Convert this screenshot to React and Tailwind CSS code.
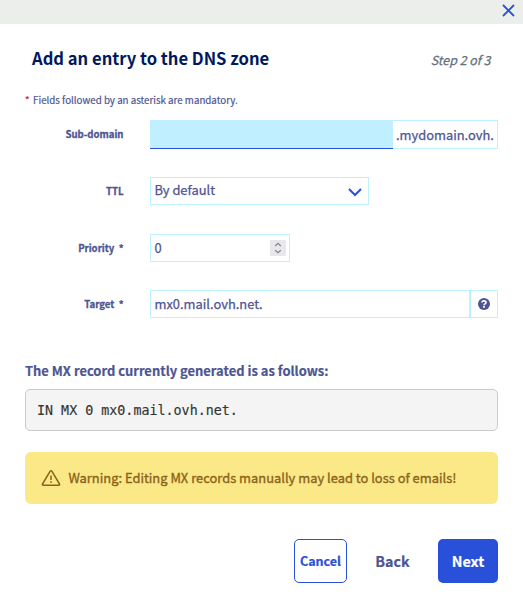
import React from "react";

function Row({ label, top, children }) {
  return (
    <div className={`flex ${top}`}>
      <div className="w-[98.5px] text-right text-[9.6px] leading-[28px] font-bold whitespace-pre [-webkit-text-stroke:0.3px]">{label}</div>
      <div className="ml-[26.5px] flex flex-1">{children}</div>
    </div>
  );
}

export default function App() {
  return (
    <div className="h-[598px] w-[523px] overflow-hidden bg-white font-['Noto_Sans_CJK_JP',sans-serif] text-[#4d5592]">
      <header className="flex h-6 justify-end bg-[#eceeeb] pr-[8px] pt-[4px]">
        <svg width="13" height="13" viewBox="0 0 13 13" fill="none" stroke="#2850d8" strokeWidth="1.8">
          <path d="M1 1 12 12M12 1 1 12" />
        </svg>
      </header>
      <main className="px-[25px]">
        <div className="flex h-[70px] items-center justify-between pl-[7px] pr-[7.5px]">
          <h1 className="pb-[2px] text-[16.6px] font-bold whitespace-nowrap text-[#00185e]">Add an entry to the DNS zone</h1>
          <span className="pt-[2px] text-[12.4px] italic whitespace-nowrap text-[#636e78] [-webkit-text-stroke:0.25px]">Step 2 of 3</span>
        </div>
        <p className="-mt-[1px] flex h-[14px] items-center gap-[3.5px] text-[9.75px] whitespace-nowrap [-webkit-text-stroke:0.2px]">
          <span className="text-[#d0203a]">*</span>
          <span>Fields followed by an asterisk are mandatory.</span>
        </p>

        <Row label="Sub-domain" top="mt-[13px]">
          <div className="h-[29px] w-[243px] border-b border-[#2850d8] bg-[#c0f0ff]" />
          <div className="h-[29px] w-[105px] border border-l-0 border-[#bef1ff] pl-[3px] text-[12.9px] leading-[28px] whitespace-nowrap [-webkit-text-stroke:0.25px]">.mydomain.ovh.</div>
        </Row>
        <Row label="TTL" top="mt-[28px]">
          <div className="flex h-[28px] w-[219px] items-center justify-between border border-[#bef1ff] pl-[3.5px] pr-[6px] text-[12.9px] leading-[24px] [-webkit-text-stroke:0.25px]">
            <span className="pb-[2px]">By default</span>
            <svg className="mt-[3px]" width="14" height="9" viewBox="0 0 14 9" fill="none" stroke="#2850d8" strokeWidth="2">
              <path d="m1 1 6 6 6-6" />
            </svg>
          </div>
        </Row>
        <Row label="Priority  *" top="mt-[29px]">
          <div className="flex h-[28px] w-[140px] items-center justify-between border border-[#bef1ff] pl-[3.5px] pr-[3px] text-[12.9px] leading-[26px] [-webkit-text-stroke:0.25px]">
            <span>0</span>
            <span className="flex h-4 w-4 items-center justify-center bg-[#e8e8ec]">
              <svg width="8" height="12" viewBox="0 0 8 12" fill="none" stroke="#85858c" strokeWidth="1.2">
                <path d="m1.2 4 2.8-2.6L6.8 4M1.2 8.2 4 10.8l2.8-2.6" />
              </svg>
            </span>
          </div>
        </Row>
        <Row label="Target  *" top="mt-[28px]">
          <div className="h-[28px] w-[320px] border border-[#bef1ff] pl-[3.5px] text-[12.9px] leading-[26px] [-webkit-text-stroke:0.25px]">mx0.mail.ovh.net.</div>
          <div className="flex h-[28px] w-[28px] items-center justify-center border border-[#bef1ff]">
            <svg width="12" height="12" viewBox="0 0 12 12">
              <circle cx="6" cy="6" r="6" fill="#4d5592" />
              <path d="M4 4.6C4 2.3 8 2.3 8 4.5 8 5.9 6 5.8 6 7.2" fill="none" stroke="#fff" strokeWidth="1.7" />
              <path d="M5.1 8h1.8v1.7H5.1z" fill="#fff" />
            </svg>
          </div>
        </Row>

        <h2 className="mt-[43px] h-[20px] text-[12.95px] leading-[20px] font-bold whitespace-nowrap [-webkit-text-stroke:0.2px]">The MX record currently generated is as follows:</h2>
        <pre className="mt-[8px] h-[42px] rounded-[5px] border border-[#cacaca] bg-[#f4f4f4] pt-[1px] pl-[11px] font-['DejaVu_Sans_Mono',monospace] text-[13.35px] leading-[40px] text-[#333] [-webkit-text-stroke:0.15px]">IN MX 0 mx0.mail.ovh.net.</pre>
        <div className="mt-[21px] flex h-[52px] items-center rounded-[6px] bg-[#fbe988] pl-[16px] text-[#8c631a]">
          <svg width="20" height="18" viewBox="0 0 20 18" fill="none" stroke="currentColor" strokeWidth="1.5" strokeLinejoin="round">
            <path d="M9.2 2.1 1.5 15c-.3.6 0 1.2.7 1.2h15.6c.7 0 1-.6.7-1.2L10.8 2.1c-.4-.6-1.2-.6-1.6 0Z" />
            <path d="M10 6.5v4.5M10 12.3v1.7" />
          </svg>
          <span className="ml-[7.5px] text-[12.92px] whitespace-nowrap [-webkit-text-stroke:0.35px]">Warning: Editing MX records manually may lead to loss of emails!</span>
        </div>
        <div className="mt-[35px] flex justify-end font-bold [-webkit-text-stroke:0.2px]">
          <button className="h-[44px] w-[53px] rounded-[5px] border border-[#2850d8] text-[12.5px] text-[#2850d8]">Cancel</button>
          <button className="h-[44px] w-[91px] text-[14.3px]">Back</button>
          <button className="h-[44px] w-[60px] rounded-[5px] bg-[#2850d8] text-[14.3px] text-white">Next</button>
        </div>
      </main>
    </div>
  );
}
